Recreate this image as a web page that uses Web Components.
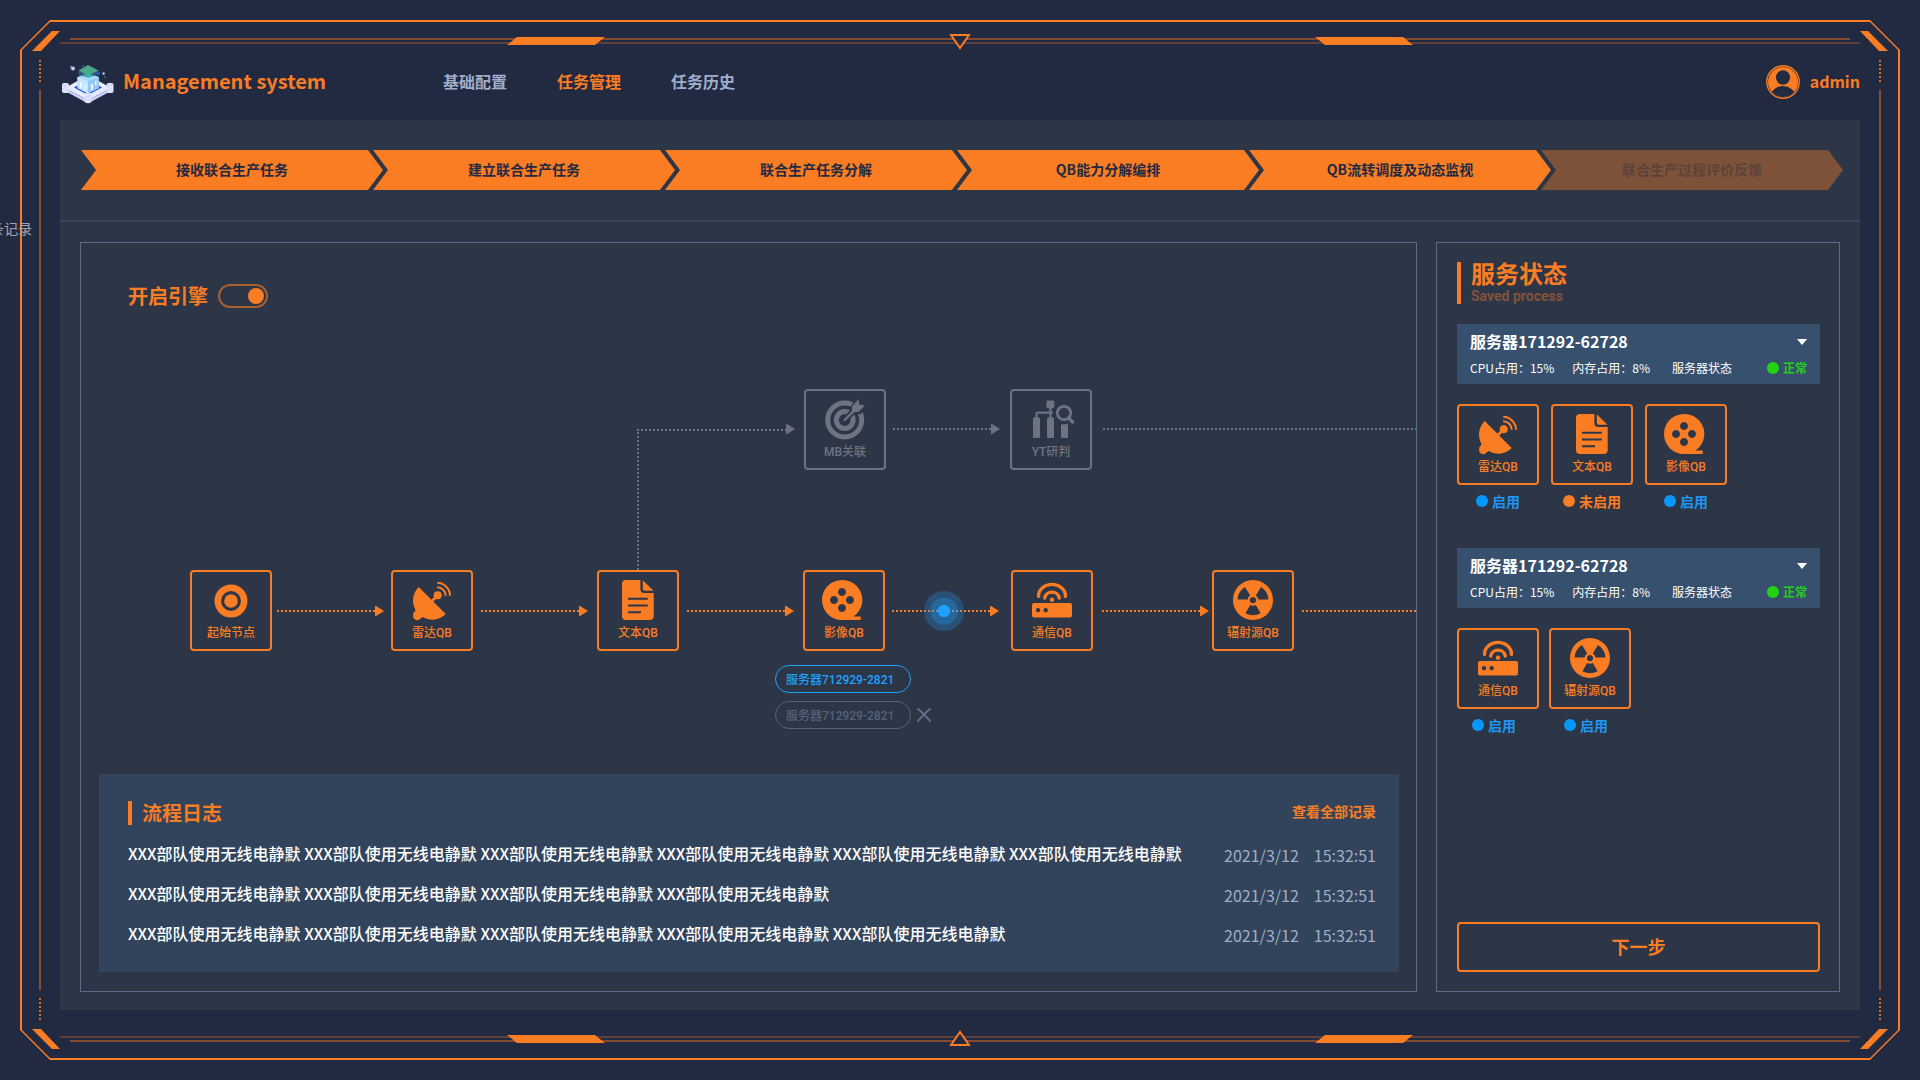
<!DOCTYPE html>
<html lang="zh-CN">
<head>
<meta charset="utf-8">
<title>Management system</title>
<style>
  :root {
    --orange: #fa7c23;
    --page: #222a42;
    --panel: #2c3647;
    --line: #5d6b8a;
    --blue: #1ea1ff;
    --muted: #6c7482;
    --cjk: "Noto Sans CJK SC", sans-serif;
    --din: Roboto, "Noto Sans CJK SC", sans-serif;
  }
  body { margin: 0; background: var(--page); font-family: var(--cjk); color: #fff; }
</style>
</head>
<body>
<app-shell>
  <hud-frame></hud-frame>
  <record-note>条记录</record-note>
  <app-header></app-header>
  <main-panel>
    <step-bar></step-bar>
    <work-area>
      <flow-board></flow-board>
      <service-panel></service-panel>
    </work-area>
  </main-panel>
</app-shell>

<script>
const define = (name, html, init) => {
  const tpl = document.createElement('template');
  tpl.innerHTML = html;
  customElements.define(name, class extends HTMLElement {
    connectedCallback() {
      if (this.shadowRoot) return;
      const root = this.attachShadow({ mode: 'open' });
      root.append(tpl.content.cloneNode(true));
      if (init) init(root, this);
    }
  });
};

const ICONS = {
  start: `<circle cx="20" cy="21" r="13.2" fill="none" stroke="currentColor" stroke-width="6.6"/><circle cx="20" cy="21" r="6.8"/>`,
  radar: `<path d="M6.7 7 L33.7 34 A19.1 19.1 0 0 1 10.5 37 L8.6 38.6 A4.4 4.4 0 0 1 1.2 37.6 V33.6 L3.6 30.2 A19.1 19.1 0 0 1 6.7 7Z"/><path d="M20 21 L25 16" stroke="currentColor" stroke-width="2.6"/><circle cx="25.7" cy="15.3" r="4"/><path d="M25.2 7.2 A8.6 8.6 0 0 1 33.7 15.8 M25.2 2.8 A13 13 0 0 1 38 15.8" fill="none" stroke="currentColor" stroke-width="2"/>`,
  doc: `<path d="M8 0 H22.4 V9 a4 4 0 0 0 4 4 H35.7 V36 a4 4 0 0 1 -4 4 H8 a4 4 0 0 1 -4 -4 V4 a4 4 0 0 1 4 -4Z M10 17.8 V19.8 H29.8 V17.8Z M10 24.5 V26.5 H29.8 V24.5Z M10 31.2 V33.2 H23 V31.2Z" fill-rule="evenodd"/><path d="M24.8 .2 L35.5 10.8 H27 a2.2 2.2 0 0 1 -2.2 -2.2Z"/>`,
  film: `<path transform="translate(-2 0)" fill-rule="evenodd" d="M20 0 A20 20 0 0 1 31.5 36.6 H38.7 V40 H20 A20 20 0 0 1 20 0Z M20 8 a4 4 0 1 0 .01 0Z M12 16 a4 4 0 1 0 .01 0Z M28 16 a4 4 0 1 0 .01 0Z M20 24 a4 4 0 1 0 .01 0Z"/>`,
  router: `<path fill-rule="evenodd" d="M2 23 H38 a2 2 0 0 1 2 2 V35.4 a2 2 0 0 1 -2 2 H2 a2 2 0 0 1 -2 -2 V25 a2 2 0 0 1 2 -2Z M6 28 a2.2 2.2 0 1 0 .01 0Z M13.7 28 a2.2 2.2 0 1 0 .01 0Z"/><circle cx="20" cy="19.8" r="2.2"/><path d="M6.6 16.4 V15.6 A13.4 11.2 0 0 1 33.4 15.6 V16.4 M12.7 18 A7.4 7 0 0 1 27.3 18" fill="none" stroke="currentColor" stroke-width="3.4" stroke-linecap="round"/>`,
  radiation: `<path fill-rule="evenodd" d="M20 0 a20 20 0 1 0 .01 0Z M4.6 19.6 A15.5 15.5 0 0 1 12 7 L17.2 15.4 A5.5 5.5 0 0 0 14.5 19.6Z M35.4 19.6 A15.5 15.5 0 0 0 28 7 L22.8 15.4 A5.5 5.5 0 0 1 25.5 19.6Z M27.6 33.2 A15.5 15.5 0 0 1 12.4 33.2 L17.2 25 A5.5 5.5 0 0 0 22.8 25Z M20 17 a3.1 3.1 0 1 0 .01 0Z"/>`,
  target: `<circle cx="19.7" cy="21" r="17" fill="none" stroke="currentColor" stroke-width="5"/><circle cx="19.7" cy="21" r="8.4" fill="none" stroke="currentColor" stroke-width="5"/><path d="M19.7 21 L30 10.5" stroke="var(--panel)" stroke-width="6"/><path d="M24.4 9 L32 -1 L41.5 6 L36 15 H25Z" fill="var(--panel)"/><path d="M19.7 21 L31 9.6" stroke="currentColor" stroke-width="2.4" stroke-linecap="round"/><path d="M27 7.6 L33.6 0 L34.2 5.4 L40 6.4 L33.4 13 H27Z"/>`,
  analysis: `<rect x="2" y="18.5" width="7" height="20.5" rx="1"/><rect x="16" y="18.5" width="7" height="20.5" rx="1"/><path d="M30 25 Q33.5 26.4 37 24.6 V38 a1 1 0 0 1 -1 1 H31 a1 1 0 0 1 -1 -1Z"/><rect x="15.5" y="1.6" width="7.8" height="7.6" rx="1.4"/><path d="M19.4 9 V19 M5.5 19 V15 a1.4 1.4 0 0 1 1.4 -1.4 H21.8" fill="none" stroke="currentColor" stroke-width="2.2"/><circle cx="33" cy="14" r="6.7" fill="none" stroke="currentColor" stroke-width="2.8"/><path d="M37.6 19 L41.6 23" stroke="currentColor" stroke-width="3.2" stroke-linecap="round"/>`
};

define('app-shell', `
<style>
  :host { display: flex; flex-direction: column; position: relative; overflow: hidden;
          box-sizing: border-box; min-height: 100vh; padding: 44px 60px 70px; }
</style>
<slot></slot>`);

/* One corner drawing, mirrored into the four quadrants of the window. */
const quadrant = `
  <i class="edge"></i><i class="slash"></i><i class="h1"></i><i class="h2"></i>
  <i class="v"></i><i class="dots"></i><i class="slab"></i>`;
define('hud-frame', `
<style>
  :host { position: absolute; inset: 0; pointer-events: none; color: var(--orange); }
  .q { position: absolute; width: 50%; height: 50%; overflow: hidden; }
  .tl { left: 0; top: 0; } .tr { right: 0; top: 0; transform: scaleX(-1); }
  .bl { left: 0; bottom: 0; transform: scaleY(-1); } .br { right: 0; bottom: 0; transform: scale(-1); }
  i { position: absolute; background: var(--orange); }
  .edge { inset: 20px 0 0 20px;
    clip-path: polygon(30px 0, 100% 0, 100% 2px, 30px 2px, 2px 30px, 2px 100%, 0 100%, 0 30px); }
  .slash { left: 32px; top: 31px; width: 28px; height: 20px; clip-path: polygon(20px 0, 100% 0, 9px 100%, 0 100%); }
  .h1 { left: 70px; right: 0; top: 38px; height: 2px; opacity: .45; }
  .h2 { left: 60px; right: 0; top: 42px; height: 2px; opacity: .27; }
  .v { left: 39px; top: 90px; bottom: 0; width: 2px; opacity: .45; }
  .dots { left: 39px; top: 60px; width: 2px; height: 22px; opacity: .8;
    background: repeating-linear-gradient(var(--orange) 0 2px, transparent 2px 4px); }
  .slab { left: 507px; top: 37px; width: 98px; height: 8px; clip-path: polygon(10px 0, 100% 0, 88px 100%, 0 100%); }
  svg { position: absolute; left: calc(50% - 11px); top: 34px; }
  svg.low { top: auto; bottom: 34px; transform: scaleY(-1); }
</style>
<div class="q tl">${quadrant}</div><div class="q tr">${quadrant}</div>
<div class="q bl">${quadrant}</div><div class="q br">${quadrant}</div>
<svg width="22" height="16"><path d="M2 1 H20 L11 14Z" fill="var(--page)" stroke="currentColor" stroke-width="2"/></svg>
<svg class="low" width="22" height="16"><path d="M2 1 H20 L11 14Z" fill="var(--page)" stroke="currentColor" stroke-width="2"/></svg>`);

define('record-note', `
<style>:host { position: absolute; left: -10px; top: 218px; font-size: 14px; line-height: 20px; white-space: nowrap; color: #a3a4a9; }</style>
<slot></slot>`);

define('brand-logo', `
<style>:host, svg { display: block; }</style>
<svg width="52" height="40" viewBox="0 0 52 40" aria-hidden="true">
  <path d="M26 11 L49 24 L26 36 L3 24Z" fill="#e9ecff"/>
  <path d="M3 24 L26 36 L49 24 V27 L26 39.5 L3 27Z" fill="#c9d0fb"/>
  <path d="M26 15 L40 23.5 L26 31 L12 23.5Z" fill="#1f4fe0"/>
  <path d="M26 9 L37 13 V24 L26 29.500 L15.5 24 V13Z" fill="#a9d8fd"/>
  <path d="M15.5 13 L26 17 V29.500 L15.5 24Z" fill="#c3e4ff"/>
  <path d="M26 17 L37 13 V24 L26 29.500Z" fill="#93c9f9"/>
  <path d="M18 18 L20 18.6 V24.6 L18 23.6Z M22.5 19.6 L24 20 V26.4 L22.5 25.6Z M29 20.4 L31 19.6 V25 L29 26Z M33 17 L34.500 16.500 V21 L33 21.600Z" fill="#eef8ff"/>
  <path d="M16.5 6.5 L26 11 L36.5 6.500 V11 L26 13.500 L16.5 11Z" fill="#2f6f8a" opacity=".7"/>
  <path d="M26 1 L36.5 6.5 L26 11.5 L16.5 6.5Z" fill="#4ba88c"/>
  <path d="M24 10.5 H28.5 L26.5 14Z" fill="#12d38c"/>
  <rect x="20.5" y="1" width="1.4" height="2" fill="#1d6fd0"/>
  <rect x="36" y="8" width="2" height="3" fill="#2450d8"/>
  <rect x="0" y="19" width="7" height="10" rx="2" fill="#dfe3ff"/>
  <rect x="44.5" y="19" width="7" height="10" rx="2" fill="#dfe3ff"/>
  <rect x="22.5" y="29" width="7" height="10" rx="2" fill="#dfe3ff"/>
  <path d="M1.5 22 h1 M4 21 h1 M1.5 25 h1 M4 26 h1 M46 22 h1 M49 21 h1 M46 26 h1 M49 25 h1 M24 33 h1 M27 32 h1 M24 36 h1 M27 36 h1" stroke="#a9b4f2"/>
  <circle cx="11" cy="4.6" r="2" fill="#b9cfe6"/><circle cx="9" cy="3" r="1" fill="#7ea3c8"/>
  <circle cx="41.6" cy="9.6" r="1.3" fill="#a7c0dc"/><circle cx="43" cy="13" r=".8" fill="#6e8fb8"/>
</svg>`);

define('app-header', `
<style>
  :host { display: flex; align-items: center; height: 76px; position: relative; color: var(--orange); }
  brand-logo { margin: 4px 9px 0 2px; }
  h1 { margin: 0; padding-bottom: 2px; width: 320px; font-size: 20px; font-weight: 700; line-height: 30px; white-space: nowrap; }
  nav { display: flex; gap: 50px; flex: 1; padding-bottom: 2px; }
  a { color: #a0aecd; text-decoration: none; font-size: 16px; line-height: 24px; font-weight: 700; white-space: nowrap; }
  a[aria-current] { color: var(--orange); }
  .user { display: flex; align-items: center; gap: 10px; color: var(--orange); }
  .user span { padding-bottom: 2px; }
  svg { display: block; }
</style>
<brand-logo></brand-logo>
<h1>Management system</h1>
<nav><a href="#config">基础配置</a><a href="#tasks" aria-current="page">任务管理</a><a href="#history">任务历史</a></nav>
<a class="user" href="#me">
  <svg width="34" height="34" viewBox="0 0 34 34" aria-hidden="true">
    <defs><clipPath id="c"><circle cx="17" cy="17" r="15"/></clipPath></defs>
    <circle cx="17" cy="17" r="16.2" fill="none" stroke="currentColor" stroke-width="1.4"/>
    <circle cx="17" cy="17" r="15" fill="currentColor"/>
    <g clip-path="url(#c)" fill="var(--page)"><ellipse cx="17" cy="12.5" rx="7" ry="7.3"/><ellipse cx="17" cy="31" rx="12" ry="10"/></g>
  </svg><span>admin</span></a>`);

define('main-panel', `
<style>:host { display: flex; flex-direction: column; flex: 1; background: var(--panel); position: relative; }</style>
<slot></slot>`);

define('step-bar', `
<style>
  :host { display: block; padding: 30px 17px 30px 21px; border-bottom: 2px solid #3b4557; }
  ol { display: flex; margin: 0; padding: 0; list-style: none; }
  li { flex: 1 1 0; height: 40px; line-height: 38px; text-align: center; font-size: 14px; font-weight: 700;
       color: var(--page); background: var(--orange); white-space: nowrap;
       clip-path: polygon(0 0, calc(100% - 15px) 0, 100% 50%, calc(100% - 15px) 100%, 0 100%, 15px 50%); }
  li + li { margin-left: -10px; }
  li.todo { background: rgb(250 124 35 / .4); color: rgb(34 42 66 / .4); }
</style>
<ol><li>接收联合生产任务</li><li>建立联合生产任务</li><li>联合生产任务分解</li><li>QB能力分解编排</li><li>QB流转调度及动态监视</li><li class="todo">联合生产过程评价反馈</li></ol>`);

define('work-area', `
<style>
  :host { display: flex; flex: 1; gap: 19px; padding: 20px 20px 18px; }
</style>
<slot></slot>`);

define('qb-tile', `
<style>
  :host { display: flex; flex-direction: column; align-items: center; box-sizing: border-box; width: 82px; height: 81px;
          padding-top: 8px; border: 2px solid; border-radius: 4px; color: var(--orange); font: 500 12px/18px var(--din); white-space: nowrap; }
  :host([off]) { color: var(--muted); }
  svg { display: block; overflow: visible; margin-bottom: 4px; }
</style>
<svg width="40" height="40" viewBox="0 0 40 40" fill="currentColor" aria-hidden="true"></svg>
<slot></slot>`, (root, el) => { root.querySelector('svg').innerHTML = ICONS[el.getAttribute('icon')]; });

define('toggle-switch', `
<style>
  label { display: flex; align-items: center; gap: 10px; font-size: 20px; line-height: 24px; font-weight: 700; color: var(--orange); }
  input { appearance: none; margin: 0; width: 50px; height: 24px; border: 2px solid #a8602f; border-radius: 12px;
          display: flex; justify-content: flex-end; align-items: center; padding: 0 2px; box-sizing: border-box; }
  input::before { content: ""; width: 16px; height: 16px; border-radius: 50%; background: var(--orange); }
  input:not(:checked) { justify-content: flex-start; }
</style>
<label><slot></slot><input type="checkbox" checked></label>`);

define('server-pill', `
<style>
  :host { display: flex; align-items: center; gap: 6px; color: var(--blue); }
  :host([idle]) { color: #56627b; }
  span { box-sizing: border-box; width: 136px; height: 28px; padding: 1px 0 0 10px; border: 1px solid; border-radius: 14px;
         font: 500 12px/26px var(--din); white-space: nowrap; }
  button { display: none; padding: 0; border: 0; background: none; color: #66728f; }
  :host([idle]) button { display: block; }
  svg { display: block; }
</style>
<span><slot></slot></span>
<button type="button" aria-label="移除"><svg width="14" height="14" viewBox="0 0 14 14"><path d="M1 1 Q6 5 13 13 M13 1 Q8 5 1 13" fill="none" stroke="currentColor" stroke-width="1.8" stroke-linecap="round"/></svg></button>`);

define('process-log', `
<style>
  :host { display: block; padding: 27px 23px 27px 29px; background: #32445c; }
  header { display: flex; justify-content: space-between; align-items: flex-start; margin-bottom: 16px; }
  h2 { margin: 0; padding-left: 10px; border-left: 4px solid var(--orange); font-size: 20px; line-height: 24px; font-weight: 700; color: var(--orange); }
  a { font-size: 14px; line-height: 20px; font-weight: 700; color: var(--orange); text-decoration: none; }
  ul { display: flex; flex-direction: column; gap: 16px; margin: 0; padding: 0; list-style: none; }
  li { display: flex; justify-content: space-between; font-size: 16px; line-height: 24px; white-space: nowrap; }
  p { margin: 0; font-weight: 500; }
  time { display: flex; gap: 15px; padding-top: 4px; line-height: 20px; font-weight: 400; color: #a0adbf; }
</style>
<header><h2>流程日志</h2><a href="#log">查看全部记录</a></header>
<ul></ul>`, root => {
  const ul = root.querySelector('ul');
  for (const n of [6, 4, 5]) {
    const li = document.createElement('li');
    li.innerHTML = `<p>${Array(n).fill('XXX部队使用无线电静默').join(' ')}</p><time><span>2021/3/12</span><span>15:32:51</span></time>`;
    ul.append(li);
  }
});

define('flow-board', `
<style>
  :host { display: flex; flex-direction: column; flex: 1; min-width: 0; border: 1px solid var(--line); }
  .bar { padding: 41px 47px 22px; }
  .canvas { position: relative; flex: 1; min-height: 444px; overflow: hidden; }
  .edges { position: absolute; inset: 0; width: 100%; height: 100%; }
  .canvas > qb-tile, .canvas > .pills { position: absolute; }
  .pills { display: flex; flex-direction: column; gap: 8px; left: 694px; top: 335px; }
  process-log { margin: 0 17px 19px 18px; }
</style>
<div class="bar"><toggle-switch>开启引擎</toggle-switch></div>
<div class="canvas">
  <svg class="edges" fill="none" aria-hidden="true">
    <g transform="translate(-81 -330)" stroke-width="2">
      <g stroke="var(--orange)" stroke-dasharray="2 2">
        <path d="M277 611H375M481 611H579M687 611H785M892 611H990M1102 611H1200M1302 611H4000"/>
      </g>
      <g stroke="var(--muted)" stroke-dasharray="2 2">
        <path d="M637 430H786M638 570V430M893 429H991M1103 429H4000"/>
      </g>
      <g fill="var(--orange)">
        <path id="h" d="M375 606.500 Q375 605.500 376 606 L384 611 L376 616 Q375 616.500 375 615.500Z"/>
        <use href="#h" x="204"/><use href="#h" x="410"/><use href="#h" x="615"/><use href="#h" x="825"/>
      </g>
      <g fill="var(--muted)"><use href="#h" x="411" y="-182"/><use href="#h" x="616" y="-182"/></g>
      <g fill="var(--blue)"><circle cx="944" cy="611" r="20" opacity=".25"/><circle cx="944" cy="611" r="13.500" opacity=".3"/><circle cx="944" cy="611" r="6.200"/></g>
    </g>
  </svg>
  <qb-tile icon="start" style="left:109px;top:240px">起始节点</qb-tile>
  <qb-tile icon="radar" style="left:310px;top:240px">雷达QB</qb-tile>
  <qb-tile icon="doc" style="left:516px;top:240px">文本QB</qb-tile>
  <qb-tile icon="film" style="left:722px;top:240px">影像QB</qb-tile>
  <qb-tile icon="router" style="left:930px;top:240px">通信QB</qb-tile>
  <qb-tile icon="radiation" style="left:1131px;top:240px">辐射源QB</qb-tile>
  <qb-tile off icon="target" style="left:723px;top:59px">MB关联</qb-tile>
  <qb-tile off icon="analysis" style="left:929px;top:59px">YT研判</qb-tile>
  <div class="pills"><server-pill>服务器712929-2821</server-pill><server-pill idle>服务器712929-2821</server-pill></div>
</div>
<process-log></process-log>`);

define('server-card', `
<style>
  :host { display: block; padding: 6px 13px; background: #37506d; color: #fff; }
  .pick { position: relative; display: flex; align-items: center; margin-bottom: 4px; }
  select { appearance: none; flex: 1; height: 24px; margin: 0; padding: 0 0 2px; border: 0; background: none; color: #fff;
           font: 700 16px/22px var(--cjk); }
  i { width: 10px; height: 6px; background: #fff; clip-path: polygon(0 0, 100% 0, 50% 100%); pointer-events: none; }
  .stats { display: flex; font-size: 12px; line-height: 20px; white-space: nowrap; }
  .cpu { margin-right: 18px; } .mem { margin-right: 22px; }
  .ok { display: flex; align-items: center; gap: 4px; margin-left: auto; color: #22d01a; font-weight: 700; }
  .ok::before { content: ""; width: 12px; height: 12px; border-radius: 50%; background: #22d314; }
</style>
<div class="pick"><select aria-label="服务器"><option>服务器171292-62728</option></select><i></i></div>
<div class="stats"><span class="cpu">CPU占用：15%</span><span class="mem">内存占用：8%</span><span>服务器状态</span><span class="ok">正常</span></div>`);

define('tile-group', `
<style>
  :host { display: flex; gap: 12px; margin: 20px 0 37px; }
  :host([compact]) { gap: 10px; }
</style>
<slot></slot>`);

define('service-item', `
<style>
  .state { display: flex; justify-content: center; align-items: center; gap: 4px; margin-top: 6px;
           font-size: 14px; line-height: 20px; font-weight: 700; color: #1e96f5; white-space: nowrap; }
  .state::before { content: ""; width: 12px; height: 12px; border-radius: 50%; background: #0699ff; }
  :host { display: block; }
  :host([off]) .state { color: var(--orange); }
  :host([off]) .state::before { background: var(--orange); }
  :host([left]) .state { padding-right: 8px; }
</style>
<slot name="tile"></slot>
<div class="state"><slot></slot></div>`);

define('service-panel', `
<style>
  :host { display: flex; flex-direction: column; box-sizing: border-box; width: 404px; flex: none;
          padding: 19px 19px 19px 20px; border: 1px solid var(--line); }
  hgroup { display: block; height: 42px; margin-bottom: 20px; padding-left: 10px; border-left: 4px solid var(--orange); color: var(--orange); }
  h2 { margin: 0; padding-bottom: 2px; font-size: 24px; line-height: 22px; font-weight: 700; }
  p { margin: 0; font: 700 14px/20px var(--din); color: #83523a; }
  button { margin-top: auto; height: 50px; padding: 0 0 2px; border: 2px solid var(--orange); border-radius: 4px; background: none; color: var(--orange);
           font: 700 18px/26px var(--cjk); }
</style>
<hgroup><h2>服务状态</h2><p>Saved process</p></hgroup>
<server-card></server-card>
<tile-group>
  <service-item><qb-tile slot="tile" icon="radar">雷达QB</qb-tile>启用</service-item>
  <service-item off><qb-tile slot="tile" icon="doc">文本QB</qb-tile>未启用</service-item>
  <service-item><qb-tile slot="tile" icon="film">影像QB</qb-tile>启用</service-item>
</tile-group>
<server-card></server-card>
<tile-group compact>
  <service-item left><qb-tile slot="tile" icon="router">通信QB</qb-tile>启用</service-item>
  <service-item left><qb-tile slot="tile" icon="radiation">辐射源QB</qb-tile>启用</service-item>
</tile-group>
<button type="button">下一步</button>`);
</script>
</body>
</html>
